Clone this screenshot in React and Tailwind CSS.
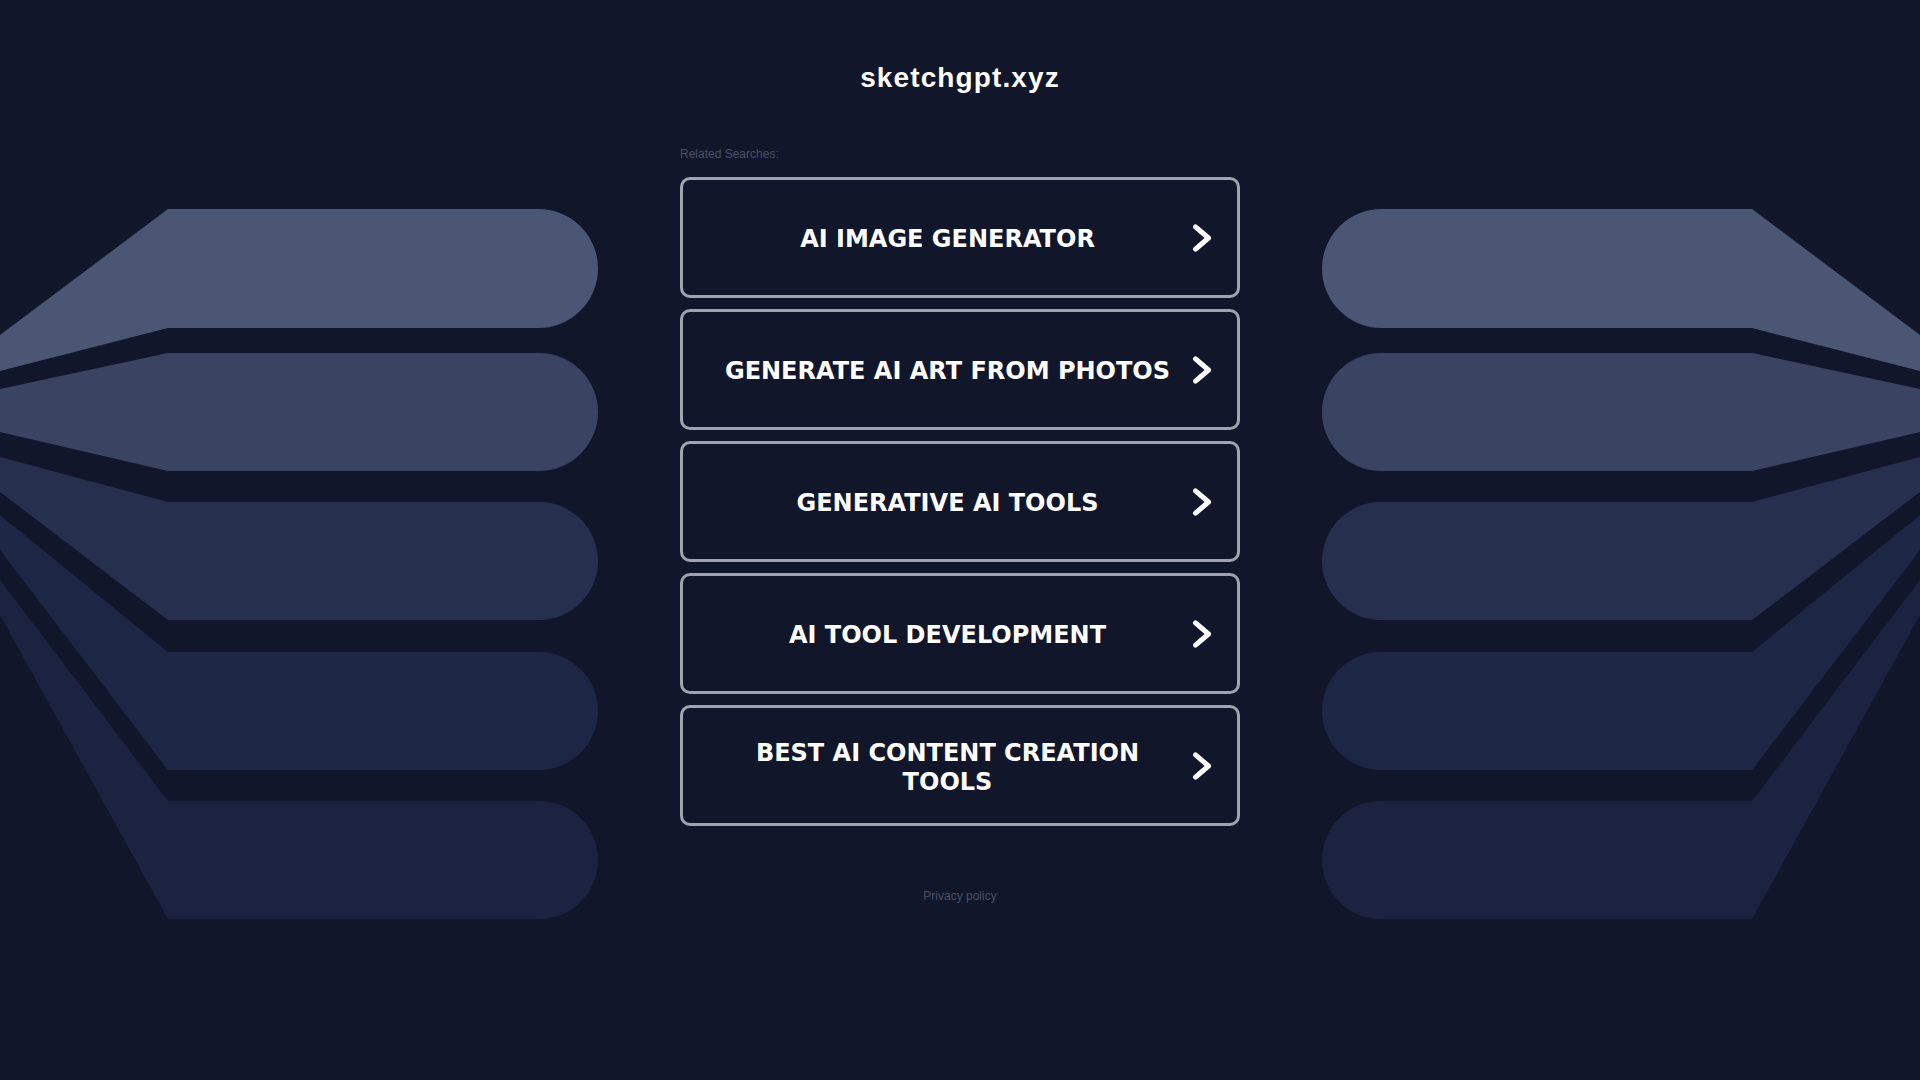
const LINKS = [
  "AI IMAGE GENERATOR",
  "GENERATE AI ART FROM PHOTOS",
  "GENERATIVE AI TOOLS",
  "AI TOOL DEVELOPMENT",
  "BEST AI CONTENT CREATION TOOLS",
];

// page coords, viewBox starts at y=209
const BARS = [
  { d: "M0,335 L168,209 H538.5 A59.5,59.5 0 0 1 538.5,328 H168 L0,371 Z", fill: "#4b5674" },
  { d: "M0,389 L168,353 H539 A59,59 0 0 1 539,471 H168 L0,432 Z", fill: "#3a4362" },
  { d: "M0,457 L168,502 H539 A59,59 0 0 1 539,620 H168 L0,492 Z", fill: "#272f4f" },
  { d: "M0,515 L168,652 H539 A59,59 0 0 1 539,770 H168 L0,550 Z", fill: "#1e2646" },
  { d: "M0,580 L168,801 H539 A59,59 0 0 1 539,919 H168 L0,615 Z", fill: "#1c2341" },
];

function Fan({ flip }) {
  return (
    <svg
      viewBox="0 209 598 710"
      className={`mt-[209px] w-[598px] h-[710px] ${flip ? "-scale-x-100" : ""}`}
    >
      {BARS.map((b) => (
        <path key={b.fill} d={b.d} fill={b.fill} />
      ))}
    </svg>
  );
}

function Chevron() {
  return (
    <svg viewBox="0 0 20 28" className="w-[20px] h-[28px] shrink-0">
      <path
        d="M3.5 2.8 L16.5 14 L3.5 25.2"
        fill="none"
        stroke="#ffffff"
        strokeWidth="5"
        strokeLinecap="round"
        strokeLinejoin="round"
      />
    </svg>
  );
}

export default function App() {
  return (
    <div className="min-h-screen bg-[#11162b] grid grid-cols-[598px_1fr_598px] items-start overflow-hidden">
      <Fan />

      <div className="w-[560px] mx-auto flex flex-col">
        <h1 className="pt-[62px] text-center text-white font-bold text-[28px] leading-[32px] tracking-[0.04em] font-['Liberation_Sans',Arial,sans-serif]">
          sketchgpt.xyz
        </h1>

        <p className="mt-[53px] text-[12px] leading-[14px] text-[#4a5066] font-['Liberation_Sans',Arial,sans-serif]">
          Related Searches:
        </p>

        <div className="mt-[16px] flex flex-col gap-[11px]">
          {LINKS.map((l) => (
            <a
              key={l}
              href="#"
              className="h-[121px] flex items-center border-[3px] border-[#a1a4ad] rounded-[10px] pl-[20px] pr-[25px]"
            >
              <span className="flex-1 px-[10px] pt-[4px] text-center text-white font-bold text-[24px] leading-[29px] font-['DejaVu_Sans',Verdana,sans-serif]">
                {l}
              </span>
              <Chevron />
            </a>
          ))}
        </div>

        <p className="mt-[63px] text-center text-[12px] leading-[14px] text-[#4a5066] font-['Liberation_Sans',Arial,sans-serif]">
          Privacy policy
        </p>
      </div>

      <Fan flip />
    </div>
  );
}
